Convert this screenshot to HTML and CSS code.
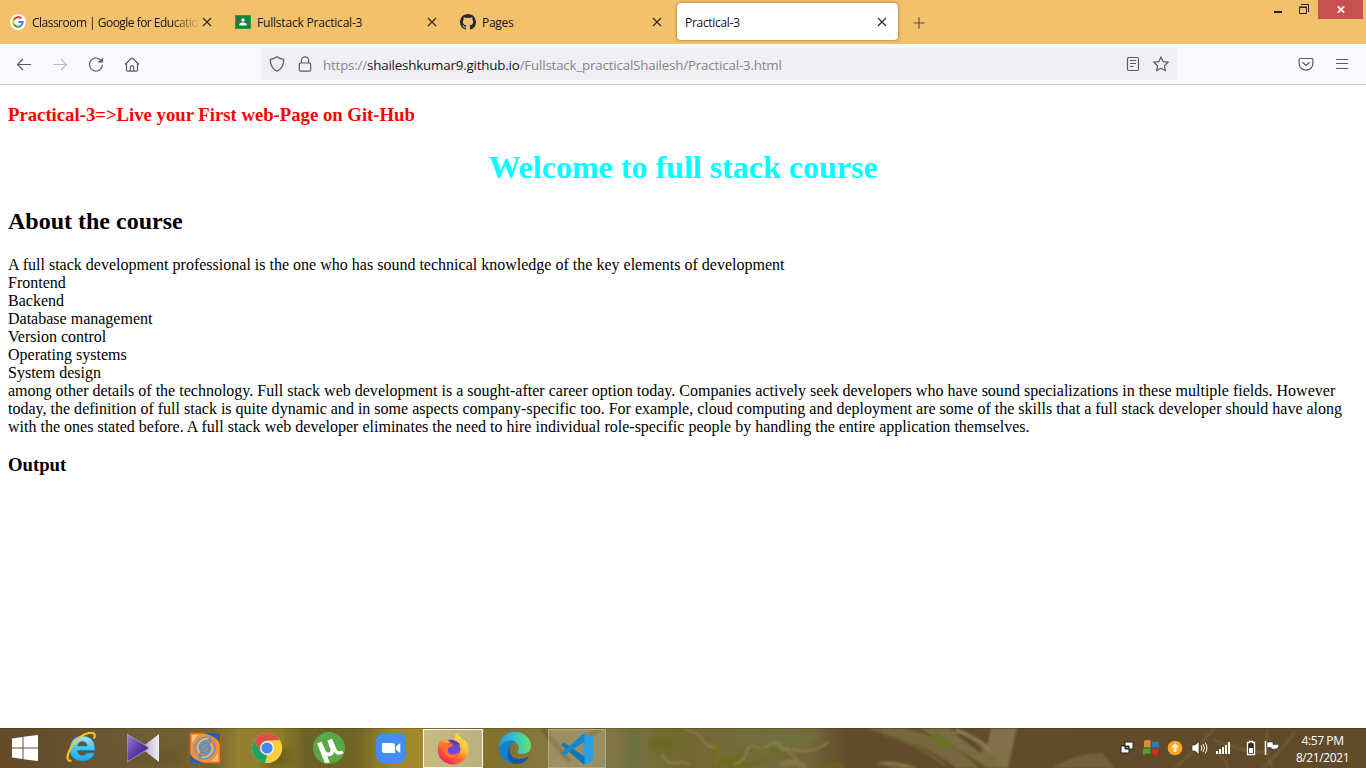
FILE: index.html
```html
<!DOCTYPE html>
<html lang="en">
<head>
<meta charset="utf-8">
<title>Practical-3</title>
<link rel="stylesheet" href="styles.css">
</head>
<body>
<header class="tabs">
  <div class="tab">
    <svg class="fav" viewBox="0 0 16 16"><circle cx="8" cy="8" r="8" fill="#fff"/><g fill="none" stroke-width="2"><path d="M11.4 4.5A4.8 4.8 0 0 0 3.8 5.7" stroke="#ea4335"/><path d="M3.8 5.7a4.8 4.8 0 0 0 0 4.6" stroke="#fbbc05"/><path d="M3.8 10.3a4.8 4.8 0 0 0 7.4 1.2" stroke="#34a853"/><path d="M11.2 11.5A4.6 4.6 0 0 0 12.7 8H8.2" stroke="#4285f4"/></g></svg>
    <span class="tab-title fade t1">Classroom | Google for Educatio</span>
    <svg class="x" viewBox="0 0 10 10"><path d="M1 1l8 8M9 1L1 9"/></svg>
  </div>
  <div class="tab">
    <svg class="fav" viewBox="0 0 16 16"><rect y="1" width="16" height="14" rx="1" fill="#188038"/><path d="M.5 1.5h15v13H.5z" fill="none" stroke="#34a853" opacity=".7"/><circle cx="8" cy="6" r="1.7" fill="#fff"/><path d="M4.3 11.6V10.500C4.300 9 6.500 8.500 8 8.500s3.700.5 3.700 2v1.100z" fill="#fff"/></svg>
    <span class="tab-title t2">Fullstack Practical-3</span>
    <svg class="x" viewBox="0 0 10 10"><path d="M1 1l8 8M9 1L1 9"/></svg>
  </div>
  <div class="tab">
    <svg class="fav" viewBox="0 0 16 16"><path fill="#24292e" d="M8 0C3.580 0 0 3.580 0 8c0 3.540 2.290 6.530 5.470 7.590.4.07.55-.17.55-.38 0-.19-.01-.82-.01-1.490-2.010.37-2.530-.49-2.690-.94-.09-.23-.48-.94-.82-1.130-.28-.15-.68-.52-.01-.53.63-.01 1.080.58 1.230.82.72 1.210 1.870.87 2.330.66.07-.52.28-.87.51-1.070-1.780-.2-3.640-.89-3.640-3.950 0-.87.31-1.590.82-2.150-.08-.2-.36-1.020.08-2.120 0 0 .67-.21 2.200.82.64-.18 1.320-.27 2-.27s1.360.09 2 .27c1.530-1.040 2.200-.82 2.200-.82.44 1.100.16 1.920.08 2.120.51.56.82 1.270.82 2.150 0 3.070-1.870 3.750-3.650 3.950.29.25.54.73.54 1.480 0 1.070-.01 1.930-.01 2.200 0 .21.15.46.55.38A8.010 8.010 0 0 0 16 8c0-4.420-3.580-8-8-8z"/></svg>
    <span class="tab-title t3">Pages</span>
    <svg class="x" viewBox="0 0 10 10"><path d="M1 1l8 8M9 1L1 9"/></svg>
  </div>
  <div class="tab active">
    <span class="tab-title t4">Practical-3</span>
    <svg class="x" viewBox="0 0 10 10"><path d="M1 1l8 8M9 1L1 9"/></svg>
  </div>
  <svg class="plus" viewBox="0 0 12 12"><path d="M6 .5v11M.5 6h11" stroke="#5b5346" stroke-width="1.2"/></svg>
  <div class="window-buttons">
    <svg width="50" height="19" viewBox="0 0 50 19"><path d="M6 11h8v2H6z" fill="#222"/><path d="M31.500 7.500h7v6h-7zM31 7h8M33 4.500h7.500V12" fill="none" stroke="#222"/></svg>
    <div class="win-close"><svg width="8" height="7" viewBox="0 0 8 7"><path d="M.8.3l6.400 6.400M7.200.3L.8 6.700" stroke="#fff" stroke-width="1.700"/></svg></div>
  </div>
</header>
<nav class="toolbar">
  <div class="nav-icons">
    <svg viewBox="0 0 16 16"><path d="M15 8.500H1.500M7 3L1.500 8.500 7 14"/></svg>
    <svg class="dim" viewBox="0 0 16 16"><path d="M1 8.500h13.500M9 3L14.500 8.500 9 14"/></svg>
    <svg viewBox="0 0 16 16"><path d="M13.300 4.700A6.500 6.500 0 1 0 14.500 8.800"/><path d="M14.700 2v4.300h-4.300z" fill="#5b5b66" stroke-width=".6"/></svg>
    <svg viewBox="0 0 16 16"><path d="M1 8.500l6.300-6.200q.7-.6 1.400 0L15 8.500M2.500 7.500V14q0 1.200 1.200 1.200h8.600q1.200 0 1.200-1.200V7.500M6.300 15V11q0-1.200 1.200-1.200h1q1.200 0 1.200 1.200v4"/></svg>
  </div>
  <div class="urlbar">
    <svg viewBox="0 0 16 16"><path d="M8 .8C6 2.600 3.500 3.100 1.300 3.300 1.200 8.500 3 12.800 8 15.200 13 12.800 14.800 8.500 14.700 3.300 12.500 3.100 10 2.600 8 .8z"/></svg>
    <svg viewBox="0 0 16 16"><rect x="2.300" y="7" width="11.400" height="8.200" rx="1.500"/><path d="M4.300 7V4.500a3.700 3.700 0 0 1 7.400 0V7"/></svg>
    <span class="url">https://<b>shaileshkumar9.github.io</b>/Fullstack_practicalShailesh/Practical-3.html</span>
    <svg viewBox="0 0 16 16"><rect x="2.500" y="1.500" width="11" height="13" rx="1.500"/><path d="M5 4.500h6M5 7.500h6M5 10.500h3.500"/></svg>
    <svg viewBox="0 0 16 16"><path d="M8 .9l2.100 4.700 5.100.6-3.800 3.500 1 5.100L8 12.300l-4.400 2.500 1-5.100L.8 6.200l5.100-.6z" stroke-linejoin="round"/></svg>
  </div>
  <div class="end-icons">
    <svg viewBox="0 0 16 16"><path d="M2.300 2.500h11.400q1.200 0 1.200 1.200V7.500a6.900 6.700 0 0 1-13.800 0V3.700q0-1.200 1.200-1.200zM4.500 6.200L8 9.500l3.500-3.300"/></svg>
    <svg viewBox="0 0 16 16"><path d="M2 3.500h12M2 7.500h12M2 12.500h12"/></svg>
  </div>
</nav>
<main class="page">
  <h3 class="red">Practical-3=&gt;Live your First web-Page on Git-Hub</h3>
  <h1>Welcome to full stack course</h1>
  <h2>About the course</h2>
  <p>A full stack development professional is the one who has sound technical knowledge of the key elements of development<br>
  Frontend<br>Backend<br>Database management<br>Version control<br>Operating systems<br>System design<br>
  among other details of the technology. Full stack web development is a sought-after career option today. Companies actively seek developers who have sound specializations in these multiple fields. However<br>
  today, the definition of full stack is quite dynamic and in some aspects company-specific too. For example, cloud computing and deployment are some of the skills that a full stack developer should have along<br>
  with the ones stated before. A full stack web developer eliminates the need to hire individual role-specific people by handling the entire application themselves.</p>
  <h3>Output</h3>
</main>
<footer class="taskbar">
  <svg class="wallpaper" viewBox="0 0 1366 40" preserveAspectRatio="none">
    <defs>
      <linearGradient id="base"><stop offset="0" stop-color="#644b2a"/><stop offset=".05" stop-color="#67502f"/><stop offset=".1" stop-color="#6e5c34"/><stop offset=".155" stop-color="#73642f"/><stop offset=".175" stop-color="#95802f"/><stop offset=".205" stop-color="#8f7c2b"/><stop offset=".225" stop-color="#6c6126"/><stop offset=".26" stop-color="#706426"/><stop offset=".285" stop-color="#9b852b"/><stop offset=".31" stop-color="#a58a2b"/><stop offset=".36" stop-color="#80712e"/><stop offset=".41" stop-color="#877944"/><stop offset=".45" stop-color="#7f7546"/><stop offset=".5" stop-color="#71682f"/><stop offset=".55" stop-color="#746a3c"/><stop offset=".595" stop-color="#71623a"/><stop offset=".62" stop-color="#634b2b"/><stop offset="1" stop-color="#604a29"/></linearGradient>
      <filter id="b1" x="-20%" y="-50%" width="140%" height="200%"><feGaussianBlur stdDeviation="1"/></filter>
      <filter id="b4" x="-50%" y="-50%" width="200%" height="200%"><feGaussianBlur stdDeviation="4"/></filter>
    </defs>
    <rect width="1366" height="40" fill="url(#base)"/>
    <g filter="url(#b4)"><path d="M650 12l15-6 15 6-5 12-24-2z" fill="#6b6720"/><path d="M626 0h14v40h-14z" fill="#697140"/><path d="M110 24h70v12h-70z" fill="#67572f"/><path d="M265 20h25v20h-25z" fill="#6c621f"/><path d="M725 3h100l-20 20-70-5z" fill="#71703d"/></g>
    <g filter="url(#b1)" fill="none">
      <g stroke-linecap="round">
        <path d="M718 30q14 6 22-2 8-10 22-9 12 1 18 8M722 35q20 6 40-2" stroke="#6a6c1d" stroke-width="4"/>
        <path d="M711 18q5-3 7 4t-2 12" stroke="#777020" stroke-width="5"/>
        <path d="M684 2q14 1 18 9t12 8M662 27q6 10 14 8t14 2M734 36q10-2 12-11t10-6 16-3 10 6M770 15q16 2 34 25M786 20q26 8 42-6" stroke="#8c8050" stroke-width="1.700"/>
        <path d="M782 36q12-4 22 2" stroke="#86784a" stroke-width="6"/><path d="M828 38q8-4 14 1" stroke="#68651e" stroke-width="4"/>
      </g>
      <path d="M868 0h34c22 4 46 14 64 28l14 12h-24C932 20 900 10 868 1z" fill="#77683f"/><path d="M882 6q34 8 64 32" stroke="#6a6230" stroke-width="3"/>
      <path d="M918 0h30c20 10 44 22 62 40h-24C964 24 942 12 918 0z" fill="#796d42"/><path d="M932 7l16 12" stroke="#697121" stroke-width="9"/>
      <path d="M958 5l24 18" stroke="#5e482a" stroke-width="5"/><path d="M956 2q32 12 50 38" stroke="#8a7b53" stroke-width="4"/>
      <path d="M991 0h26l-9 40h-8l-13-23z" fill="#816f4a"/><path d="M876 36q15-6 42 4h-20q-10-3-22-4z" fill="#857850"/><path d="M891 38h10" stroke="#68711e" stroke-width="3"/><path d="M1052 40q22-14 50-15l13 15z" fill="#75613c"/>
      <path d="M1175 40l16-15L1215 0M1268 0q-5 18 5 40M1295 4q-14 19-32 36M1228 40q-5-14-12-15M1214 12q28 12 50 12" stroke="#76663a" stroke-width="1.500"/>
      <path d="M542 0l28 34M600 0l-16 12" stroke="#6f6230" stroke-width="5"/>
    </g>
    <path d="M0 .5h1366" stroke="#3e321c" opacity=".35"/>
  </svg>
  <div class="start"><svg width="26" height="26" viewBox="0 0 26 26"><path d="M0 3.500L10.500 2v10.500H0zM11.500 1.800L26 0v12.500H11.500zM0 13.500h10.500V24L0 22.500zM11.500 13.500H26V26l-14.500-1.800z" fill="#fff"/></svg></div>
  <div class="task"><svg viewBox="0 0 32 32"><defs><linearGradient id="ie" x2="0" y2="1"><stop stop-color="#a4eaff"/><stop offset=".5" stop-color="#46c3f4"/><stop offset="1" stop-color="#2aa5e4"/></linearGradient></defs><path fill="url(#ie)" stroke="#1680bb" stroke-width=".7" d="M30 18.500H12.500c.3 3 2 4.700 4.800 4.700 2 0 3.400-.8 4.100-2.300h8C28 26 23.500 29 17.200 29 9.500 29 4.800 24.500 4.800 17S9.800 4 17.500 4C25.500 4 30.300 9 30 18.500zM12.600 14h9.500c-.2-2.800-1.900-4.400-4.600-4.400S12.900 11.200 12.600 14z"/><path d="M6.500 28.500C2 30 1.700 25 4 19.500 7.500 11 16 2.500 24 1c5-1 6.800 1.300 5 5.700" fill="none" stroke="#f5c51e" stroke-width="2.200"/></svg></div>
  <div class="task"><svg viewBox="0 0 32 32"><defs><linearGradient id="km" y2="1"><stop stop-color="#9d87cd"/><stop offset=".5" stop-color="#5c3ba5"/><stop offset="1" stop-color="#3d1c85"/></linearGradient><linearGradient id="kw"><stop stop-color="#aaa6c4"/><stop offset="1" stop-color="#f1eff8"/></linearGradient></defs><path d="M32 2v28L14 16z" fill="url(#kw)"/><path d="M0 2l21 13q1 1 0 2L0 30z" fill="url(#km)" stroke="#b8abd8" stroke-width=".7"/></svg></div>
  <div class="task"><svg viewBox="0 0 32 32"><rect x="1" y="1" width="30" height="30" rx="1.500" fill="#fb902f" stroke="#c75c23" stroke-width=".8"/><path d="M13 1h17l1 1v10C28 5 21 3 13 1zM1 21c2 6 8 8 15 10H2l-1-1z" fill="#2c5f99"/><path d="M3 3h7q-4 2-7 8zM29 29h-7q4-2 7-8z" fill="#ffc48b"/><g fill="none" stroke-linecap="round"><path d="M16 15c3-2 5 1 3 4s-8 3-9-3S16 5 22 9" stroke="#6d8dad" stroke-width="3"/><path d="M16 17c-3 2-5-1-3-4s8-3 9 3-6 11-12 7" stroke="#6d8dad" stroke-width="3"/><path d="M7 21C3 11 12 3 22 6M25 11c4 10-5 18-15 15" stroke="#7798b7" stroke-width="2.200"/><path d="M10 20C6 12 13 6 19 7M22 12c4 8-3 14-9 13" stroke="#ffc27f" stroke-width="1.300"/></g></svg></div>
  <div class="task"><svg viewBox="0 0 32 32"><circle cx="16" cy="16" r="15" fill="#ffcd40"/><path d="M3 8.500A15 15 0 0 1 29 8.500H16L9.500 19.500z" fill="#dd5144"/><path d="M3 8.500L9.500 19.500 16 23.500l-1.700 7.400A15 15 0 0 1 3 8.500z" fill="#1da362"/><path d="M14.300 30.900L22.500 20 22 8.500h7A15 15 0 0 1 14.300 30.900z" fill="#ffcd40"/><circle cx="16" cy="16" r="7" fill="#f5f5f5"/><circle cx="16" cy="16" r="5.600" fill="#4587f3"/></svg></div>
  <div class="task"><svg viewBox="0 0 32 32"><circle cx="16" cy="16" r="16" fill="#59a845"/><path d="M4 11.500l4.500-1.700 4.200 9.200c1.600 3 5.400 1.600 4.700-1.800L14.300 8.500 19 6.800l4.500 10.400c1 2.300 2.800 2.600 5.500 1.300l1.700 2.500c-4.200 2.600-7.700 2-9.700-1.200-.6 3.600-3.800 5.200-6.800 4.200l2.500 6.500-4.800.5z" fill="#fff"/></svg></div>
  <div class="task"><svg viewBox="0 0 32 32"><rect x="1" y="1" width="30" height="30" rx="7.500" fill="#458df5"/><path d="M7 11h10q3 0 3 3v7H9.500q-2.500 0-2.500-2.500zM21 14.500l4.300-3.500v10L21 17.800z" fill="#fff"/></svg></div>
  <div class="task current"><svg viewBox="0 0 32 32"><defs><linearGradient id="ff" x1=".9" x2=".2" y2="1"><stop stop-color="#fff04a"/><stop offset=".4" stop-color="#ffbe2d"/><stop offset=".65" stop-color="#ff6535"/><stop offset="1" stop-color="#f01864"/></linearGradient></defs><path d="M20 0c2 3 5 5 6 8l1.500-1.500C30 9 31.500 13 31.500 17 31.500 25 24.500 31.500 16 31.500S.8 25 .8 17c0-4 1-7 3.200-10l.5 2.500c1-2 2.200-3.500 4-4.500-.2 2 .3 3 1.500 4l4-.5c1.500-1 2.500-2 4-2.300C17.500 4 18 2 20 0z" fill="url(#ff)"/><circle cx="16.500" cy="16" r="7" fill="#7047cf"/><path d="M6 10.500c3-2 7 0 10 1 0 2-3 2.500-4.500 3.500-2 3 .5 6.500 4 6.500 3 0 4-1.500 6-2-1 4-4 5-7 5-6 0-10-6-8.500-14z" fill="#ff6f35"/><path d="M11 7c5-1 10 1 12.500 5-2-1-4-1-5-.5-1-2-3.500-2-5.500-2z" fill="#5e3ba9"/></svg></div>
  <div class="task"><svg viewBox="0 0 32 32"><defs><linearGradient id="ed"><stop stop-color="#239fd6"/><stop offset=".45" stop-color="#2cc2dc"/><stop offset="1" stop-color="#69e267"/></linearGradient></defs><path d="M0 16C0 6 7 0 16 0c10 0 16 7 16 14 0 5-4 8-9 8-4 0-5-1.500-4-3 1-2 1.500-4-.5-6.500C14 6 4 8 0 16z" fill="url(#ed)"/><path d="M0 16C4 8 12 7 17 10c-6 0-8 6-6 12 2 5 7 9 12 8C13 35 0 29 0 16z" fill="#1681cf"/><path d="M14 12c-5 4-4 11 1 14 5 2 11 1 15-2-2 5-8 9-14 8C7 31 6 18 14 12z" fill="#1558a5"/></svg></div>
  <div class="task open"><svg viewBox="0 0 32 32"><path d="M22.500 0L32 4v24l-9.500 4z" fill="#2a9ee3"/><path d="M0 12l3-2.500 20.500 14V32L0 12z" fill="#0878b9"/><path d="M0 20l3 2.500L23.500 8.500V0L0 20z" fill="#1687cb"/></svg></div>
  <div class="tray">
    <svg class="g24" viewBox="0 0 24 24"><g fill="#fff" stroke="#222"><path d="M10 6h8v7h-8zM6 10h8v7H6z"/><path d="M10.500 10.500h3v2h-3z" fill="#aaa"/></g></svg>
    <svg class="g24" viewBox="0 0 24 24"><path d="M5 5q4-2 7 0v7H5z" fill="#d98d35"/><path d="M12 5q4 2 8 0v6q-4 3-8 1z" fill="#1d82ba"/><path d="M4 12q4-2 8 0v6q-4-2-8 1z" fill="#51a13a"/><path d="M12 12q4 2 7 0v7l-3 1-1-2-3 1z" fill="#cf301e"/><path d="M12 5v14M4 12h15" stroke="#423829" stroke-width=".7"/></svg>
    <svg class="g24" viewBox="0 0 24 24"><circle cx="12" cy="12" r="7.300" fill="#ffa426"/><path d="M12 7l4 4.500h-2.500V16h-3v-4.500H8z" fill="#fff4d5"/></svg>
    <svg class="g24" viewBox="0 0 24 24"><path d="M5 9h3l4-3.500v13L8 15H5z" fill="#fff" stroke="#333" stroke-width=".7"/><path d="M14 9.500q2 2.500 0 5M16 8q3 4 0 8M18 6.500q4 5.500 0 11" fill="none" stroke="#fff"/></svg>
    <svg class="g24" viewBox="0 0 24 24"><path d="M5 15h2v3H5zM8 13h2v5H8zM11 11h2v7h-2zM14 9h2v9h-2zM17 6h2v12h-2z" fill="#fff"/></svg>
    <svg class="g24 battery" viewBox="0 0 24 24"><path d="M10.500 6.500V5.500h3v1h2v12h-7v-12z" fill="#30291f" stroke="#fff" stroke-width="1.300"/><path d="M10 12h4v5h-4z" fill="#fff"/></svg>
    <svg class="flag" viewBox="0 0 18 24"><path d="M2.500 5v14" stroke="#fff" stroke-width="1.500"/><path d="M4 6h6v2.500h6l-1 3.500q-3 2-6 1l-1-1.500H4z" fill="#fff" stroke="#222" stroke-width=".5"/></svg>
  </div>
  <div class="clock"><span class="time">4:57 PM</span><span class="date">8/21/2021</span></div>
</footer>
</body>
</html>
```
FILE: styles.css
```css
* { box-sizing: border-box; }
body { margin: 0; height: 768px; display: flex; flex-direction: column; overflow: hidden; background: #fff; font-family: "Open Sans", "Noto Sans", sans-serif; }
svg { display: block; flex: none; }

.tabs { height: 44px; flex: none; background: #f3c16b; display: flex; align-items: flex-start; padding-left: 2px; }
.tab { width: 222px; height: 37px; margin: 3px 3px 0 0; padding: 0 12px 0 8px; display: flex; align-items: center; flex: none; border-radius: 4px; }
.tab.active { width: 221px; padding-right: 11px; background: #fff; box-shadow: 0 0 3px rgba(90, 65, 20, .7); }
.fav { width: 16px; height: 16px; margin-right: 6px; }
.tab-title { flex: 1; min-width: 0; height: 20px; padding-top: 2px; line-height: 18px; overflow: hidden; white-space: nowrap; font-size: 12px; color: #15141a; }
.fade { -webkit-mask-image: linear-gradient(to right, #000 82%, transparent); mask-image: linear-gradient(to right, #000 82%, transparent); }
.t1 { letter-spacing: -.52px; }
.t2 { letter-spacing: -.2px; }
.t3, .t4 { letter-spacing: -.3px; }
.x { width: 10px; height: 10px; stroke: #2d261b; stroke-width: 1.1; fill: none; }
.plus { width: 12px; height: 12px; margin: 17px 0 0 12px; }
.window-buttons { display: flex; margin-left: auto; padding-right: 3px; }
.win-close { width: 45px; height: 19px; background: #c75050; display: flex; align-items: center; justify-content: center; }

.toolbar { height: 41px; flex: none; background: #f9f9fb; border-bottom: 1px solid #ccccd1; display: flex; align-items: center; }
.toolbar svg { width: 16px; height: 16px; fill: none; stroke: #5b5b66; stroke-width: 1.2; }
.nav-icons { width: 261px; padding-left: 16px; display: flex; gap: 20px; }
.toolbar .dim { opacity: .4; }
.urlbar { width: 916px; height: 32px; border-radius: 4px; background: #f0f0f4; display: flex; align-items: center; padding: 0 8px; gap: 12px; }
.url { flex: 1; white-space: nowrap; font-size: 13.33px; color: #85858b; margin-left: -2px; padding-top: 2px; letter-spacing: -.18px; }
.url b { font-weight: 400; color: #15141a; }
.end-icons { margin-left: auto; padding-right: 16px; display: flex; gap: 20px; }

.page { flex: 1; min-height: 0; padding: 0 8px; font-family: "Liberation Serif", serif; font-size: 16px; line-height: 18px; color: #000; white-space: nowrap; }
.page h3 { margin: 18px 0 20px; font-size: 18.72px; line-height: 21px; }
.page .red { color: red; margin-top: 19px; }
.page h1 { margin: 24px 0 21px; font-size: 32px; line-height: 36px; text-align: center; color: cyan; }
.page h2 { margin: 23px 0 21px; font-size: 24px; line-height: 27px; }
.page p { margin: 0; letter-spacing: .006px; }

.taskbar { position: relative; height: 40px; flex: none; display: flex; align-items: stretch; }
.wallpaper { position: absolute; inset: 0; width: 100%; height: 100%; }
.start, .task, .tray, .clock { position: relative; display: flex; align-items: center; justify-content: center; }
.start { width: 50px; flex: none; }
.task { width: 58px; margin: 0 2px; flex: none; }
.task svg { width: 32px; height: 32px; }
.current { margin: 1px 1px 0 1px; width: 60px; border: 1px solid #fffce9; background: rgba(235, 235, 215, .5); }
.open { border: 1px solid #b6aa83; background: rgba(225, 215, 190, .25); margin-top: 1px; }
.tray { margin-left: auto; justify-content: flex-start; width: 167px; }
.g24 { width: 24px; height: 24px; }
.battery { margin-left: 4px; }
.flag { width: 18px; height: 24px; }
.clock { width: 81px; margin-right: 3px; flex-direction: column; font-size: 12px; line-height: 17px; color: #fff; padding-top: 2px; }
.clock span { letter-spacing: -.4px; white-space: nowrap; }
```
